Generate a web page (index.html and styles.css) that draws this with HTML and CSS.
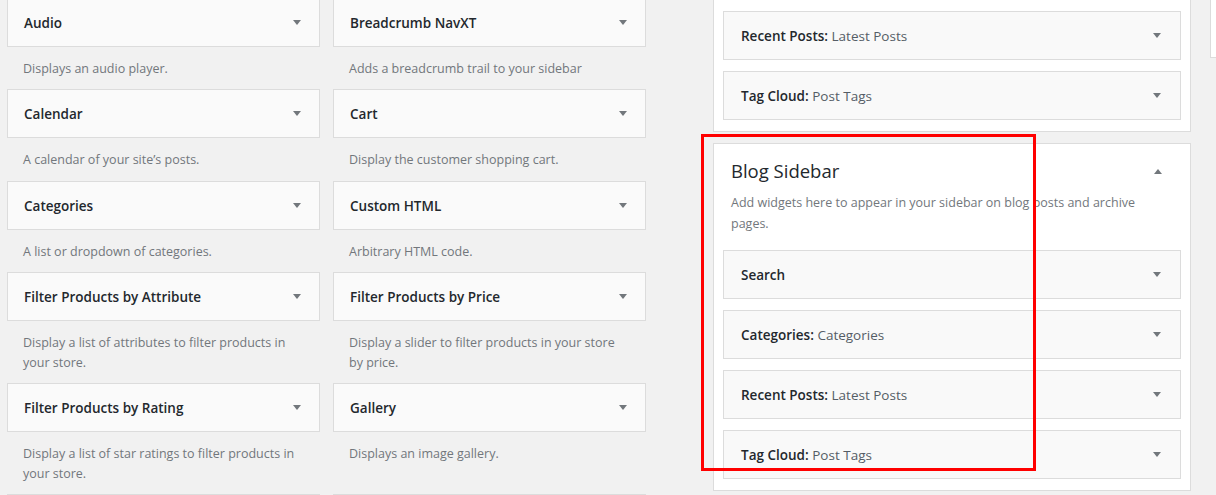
FILE: index.html
```html
<!DOCTYPE html>
<html lang="en">
<head>
<meta charset="utf-8">
<title>Widgets</title>
<link rel="stylesheet" href="styles.css">
</head>
<body>
<div class="page">
  <div class="widget-list">
    <div class="avail">
      <div class="wtop"><span class="wtitle">Audio</span><svg class="arrow" width="8" height="5" viewBox="0 0 8 5"><polygon points="0,0 8,0 4,5"/></svg></div>
      <p class="wdesc">Displays an audio player.</p>
    </div>
    <div class="avail">
      <div class="wtop"><span class="wtitle">Breadcrumb NavXT</span><svg class="arrow" width="8" height="5" viewBox="0 0 8 5"><polygon points="0,0 8,0 4,5"/></svg></div>
      <p class="wdesc">Adds a breadcrumb trail to your sidebar</p>
    </div>
    <div class="avail">
      <div class="wtop"><span class="wtitle">Calendar</span><svg class="arrow" width="8" height="5" viewBox="0 0 8 5"><polygon points="0,0 8,0 4,5"/></svg></div>
      <p class="wdesc">A calendar of your site’s posts.</p>
    </div>
    <div class="avail">
      <div class="wtop"><span class="wtitle">Cart</span><svg class="arrow" width="8" height="5" viewBox="0 0 8 5"><polygon points="0,0 8,0 4,5"/></svg></div>
      <p class="wdesc">Display the customer shopping cart.</p>
    </div>
    <div class="avail">
      <div class="wtop"><span class="wtitle">Categories</span><svg class="arrow" width="8" height="5" viewBox="0 0 8 5"><polygon points="0,0 8,0 4,5"/></svg></div>
      <p class="wdesc">A list or dropdown of categories.</p>
    </div>
    <div class="avail">
      <div class="wtop"><span class="wtitle">Custom HTML</span><svg class="arrow" width="8" height="5" viewBox="0 0 8 5"><polygon points="0,0 8,0 4,5"/></svg></div>
      <p class="wdesc">Arbitrary HTML code.</p>
    </div>
    <div class="avail">
      <div class="wtop"><span class="wtitle">Filter Products by Attribute</span><svg class="arrow" width="8" height="5" viewBox="0 0 8 5"><polygon points="0,0 8,0 4,5"/></svg></div>
      <p class="wdesc">Display a list of attributes to filter products in your store.</p>
    </div>
    <div class="avail">
      <div class="wtop"><span class="wtitle">Filter Products by Price</span><svg class="arrow" width="8" height="5" viewBox="0 0 8 5"><polygon points="0,0 8,0 4,5"/></svg></div>
      <p class="wdesc">Display a slider to filter products in your store by price.</p>
    </div>
    <div class="avail">
      <div class="wtop"><span class="wtitle">Filter Products by Rating</span><svg class="arrow" width="8" height="5" viewBox="0 0 8 5"><polygon points="0,0 8,0 4,5"/></svg></div>
      <p class="wdesc">Display a list of star ratings to filter products in your store.</p>
    </div>
    <div class="avail">
      <div class="wtop"><span class="wtitle">Gallery</span><svg class="arrow" width="8" height="5" viewBox="0 0 8 5"><polygon points="0,0 8,0 4,5"/></svg></div>
      <p class="wdesc">Displays an image gallery.</p>
    </div>
    <div class="avail">
      <div class="wtop"></div>
    </div>
    <div class="avail">
      <div class="wtop"></div>
    </div>
  </div>

  <div class="sidebars">
    <div class="holder holder-top">
      <div class="swidget"></div>
      <div class="swidget"><span class="wtitle">Recent Posts: <span class="in-title">Latest Posts</span></span><svg class="arrow" width="8" height="5" viewBox="0 0 8 5"><polygon points="0,0 8,0 4,5"/></svg></div>
      <div class="swidget"><span class="wtitle">Tag Cloud: <span class="in-title">Post Tags</span></span><svg class="arrow" width="8" height="5" viewBox="0 0 8 5"><polygon points="0,0 8,0 4,5"/></svg></div>
    </div>
    <div class="holder holder-blog">
      <div class="sname">
        <h2>Blog Sidebar</h2>
        <svg class="arrow" width="8" height="5" viewBox="0 0 8 5"><polygon points="0,5 8,5 4,0"/></svg>
      </div>
      <p class="sdesc">Add widgets here to appear in your sidebar on blog posts and archive pages.</p>
      <div class="swidget"><span class="wtitle">Search</span><svg class="arrow" width="8" height="5" viewBox="0 0 8 5"><polygon points="0,0 8,0 4,5"/></svg></div>
      <div class="swidget"><span class="wtitle">Categories: <span class="in-title">Categories</span></span><svg class="arrow" width="8" height="5" viewBox="0 0 8 5"><polygon points="0,0 8,0 4,5"/></svg></div>
      <div class="swidget"><span class="wtitle">Recent Posts: <span class="in-title">Latest Posts</span></span><svg class="arrow" width="8" height="5" viewBox="0 0 8 5"><polygon points="0,0 8,0 4,5"/></svg></div>
      <div class="swidget"><span class="wtitle">Tag Cloud: <span class="in-title">Post Tags</span></span><svg class="arrow" width="8" height="5" viewBox="0 0 8 5"><polygon points="0,0 8,0 4,5"/></svg></div>
    </div>
  </div>

  <div class="holder holder-next"></div>

  <div class="highlight"></div>
</div>
</body>
</html>
```

FILE: styles.css
```css
html, body {
  margin: 0;
  padding: 0;
  background: #f1f1f1;
  overflow: hidden;
}
body {
  font-family: "Open Sans", "Noto Sans", sans-serif;
  color: #23282d;
  width: 1216px;
  height: 495px;
}
.page {
  position: relative;
  display: flex;
  align-items: flex-start;
  height: 495px;
  overflow: hidden;
}

/* available widgets */
.widget-list {
  flex: 0 0 auto;
  margin: -2.5px 0 0 7px;
  display: grid;
  grid-template-columns: 313px 313px;
  column-gap: 13px;
}
.wtop {
  box-sizing: border-box;
  height: 49px;
  background: #fafafa;
  border: 1px solid #dcdcdc;
  display: flex;
  align-items: center;
  justify-content: space-between;
  padding: 0 18px 0 16px;
}
.wtitle {
  font-size: 13.5px;
  font-weight: 600;
  color: #23282d;
  white-space: nowrap;
  padding-top: 1px;
}
.in-title {
  font-weight: 400;
  color: #555d66;
}
.arrow {
  flex: 0 0 auto;
  fill: #72777c;
}
.wdesc {
  margin: 0;
  padding: 12px 16px 11px 16px;
  font-size: 12.5px;
  line-height: 19.5px;
  color: #72777c;
}

/* sidebars */
.sidebars {
  flex: 0 0 478px;
  margin-left: 67px;
}
.holder {
  box-sizing: border-box;
  background: #fff;
  border: 1px solid #dcdcdc;
  padding: 0 9px;
}
.holder-top {
  border-top: none;
  margin-top: -49px;
}
.holder-blog {
  margin-top: 11px;
}
.swidget {
  box-sizing: border-box;
  height: 49px;
  margin-bottom: 11px;
  background: #f9f9f9;
  border: 1px solid #dcdcdc;
  display: flex;
  align-items: center;
  justify-content: space-between;
  padding: 0 19px 0 17px;
}
.holder-top .swidget:first-child {
  border-top: none;
}
.sname {
  display: flex;
  align-items: center;
  justify-content: space-between;
  padding: 13px 19px 0 8px;
}
.sname h2 {
  margin: 0;
  font-size: 18.5px;
  line-height: 28px;
  font-weight: 400;
  color: #23282d;
}
.sdesc {
  margin: 7px 0 16px;
  padding: 0 8px;
  font-size: 12.5px;
  line-height: 21px;
  color: #72777c;
}

.holder-next {
  flex: 0 0 200px;
  margin-left: 19px;
  margin-top: -10px;
  height: 68px;
  border-top: none;
}

.highlight {
  position: absolute;
  left: 701px;
  top: 134px;
  width: 335px;
  height: 337px;
  box-sizing: border-box;
  border: 3px solid #ff0000;
  pointer-events: none;
}
```
